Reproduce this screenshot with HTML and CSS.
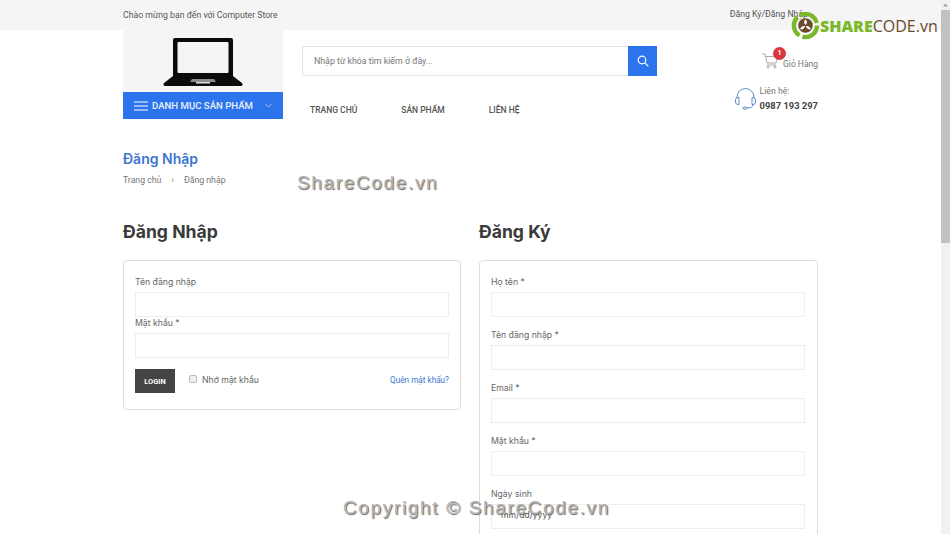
FILE: index.html
```html
<!DOCTYPE html>
<html lang="vi">
<head>
    <meta charset="UTF-8">
    <meta name="viewport" content="width=device-width, initial-scale=1.0">
    <title>Đăng Nhập</title>
    <link rel="stylesheet" href="styles.css">
</head>
<body>
    <div class="page">
        <div class="topbar">
            <div class="container topbar-inner">
                <span>Chào mừng bạn đến với Computer Store</span>
                <a class="topbar-link">Đăng Ký/Đăng Nhập</a>
            </div>
        </div>

        <header class="container header">
            <div class="brand">
                <div class="logo">
                    <svg width="80" height="50" viewBox="0 0 80 50">
                        <path d="M10 3a2 2 0 0 1 2-2h56a2 2 0 0 1 2 2v36l9 7a2 2 0 0 1-1 3H2a2 2 0 0 1-1-3l9-7z" fill="#0b0b0b"/>
                        <rect x="14.500" y="5" width="51" height="31" rx="1" fill="#f5f5f5"/>
                        <path d="M29 42h22l2 3H27z" fill="#8a8a8a"/>
                        <rect x="33" y="45" width="14" height="1.500" fill="#ddd"/>
                    </svg>
                </div>
                <div class="menu-btn">
                    <svg width="14" height="10" viewBox="0 0 14 10" stroke="#fff" stroke-width="1.200">
                        <path d="M0 1h14M0 5h14M0 9h14"/>
                    </svg>
                    <span>DANH MỤC SẢN PHẨM</span>
                    <svg class="menu-caret" width="7" height="5" viewBox="0 0 7 5" fill="none" stroke="#c6d9f9" stroke-width=".8">
                        <path d="M.5 1l3 3 3-3"/>
                    </svg>
                </div>
            </div>

            <div class="middle">
                <div class="search">
                    <input type="text" placeholder="Nhập từ khóa tìm kiếm ở đây...">
                    <button class="search-btn">
                        <svg width="12" height="12" viewBox="0 0 12 12" fill="none" stroke="#fff" stroke-width="1.200">
                            <circle cx="5" cy="5" r="3.800"/>
                            <path d="M7.800 7.800L11.300 11.300"/>
                        </svg>
                    </button>
                </div>
                <nav class="nav">
                    <a>TRANG CHỦ</a>
                    <a>SẢN PHẨM</a>
                    <a>LIÊN HỆ</a>
                </nav>
            </div>

            <div class="aside">
                <div class="cart">
                    <svg width="16" height="16" viewBox="0 0 16 16" fill="none" stroke="#888" stroke-width=".7">
                        <path d="M0 1h3l2 9h9l1.500-6.500H3.600"/>
                        <path d="M5 12h9"/>
                        <circle cx="6" cy="14" r="1"/>
                        <circle cx="13" cy="14" r="1"/>
                    </svg>
                    <span class="cart-badge">1</span>
                    <span class="cart-label">Giỏ Hàng</span>
                </div>
                <div class="contact">
                    <svg width="21" height="23" viewBox="0 0 21 23" fill="none" stroke="#4f7fc9" stroke-width=".9">
                        <path d="M2 11V10a8.500 8.500 0 0 1 17 0v1"/>
                        <path d="M4 10.500H3a2.500 2.500 0 0 0-2.500 2.500v2A2.500 2.500 0 0 0 3 17.500h1z"/>
                        <path d="M17 10.500h1a2.500 2.500 0 0 1 2.500 2.500v2a2.500 2.500 0 0 1-2.500 2.500h-1z"/>
                        <path d="M18 17.500c0 2.500-2 3.500-6 3.500"/>
                        <rect x="8" y="20" width="4" height="2" rx="1"/>
                    </svg>
                    <div>
                        <div class="contact-label">Liên hệ:</div>
                        <div class="contact-phone">0987 193 297</div>
                    </div>
                </div>
            </div>
        </header>

        <main class="container">
            <section class="crumbs">
                <h2>Đăng Nhập</h2>
                <div class="crumb-row">
                    <span>Trang chủ</span>
                    <span class="crumb-sep">›</span>
                    <span>Đăng nhập</span>
                </div>
            </section>

            <div class="columns">
                <section>
                    <h3>Đăng Nhập</h3>
                    <form class="card login-card">
                        <label class="field">Tên đăng nhập
                            <input type="text">
                        </label>
                        <label class="field">Mật khẩu *
                            <input type="password">
                        </label>
                        <div class="login-row">
                            <button type="button" class="login-btn">LOGIN</button>
                            <label class="remember"><input type="checkbox">Nhớ mật khẩu</label>
                            <a class="forgot">Quên mật khẩu?</a>
                        </div>
                    </form>
                </section>

                <section>
                    <h3>Đăng Ký</h3>
                    <form class="card register-card">
                        <label class="field">Họ tên *
                            <input type="text">
                        </label>
                        <label class="field">Tên đăng nhập *
                            <input type="text">
                        </label>
                        <label class="field">Email *
                            <input type="text">
                        </label>
                        <label class="field">Mật khẩu *
                            <input type="password">
                        </label>
                        <label class="field">Ngày sinh
                            <input class="date" type="text" placeholder="mm/dd/yyyy">
                        </label>
                    </form>
                </section>
            </div>
        </main>
    </div>

    <div class="scrollbar">
        <svg class="scroll-arrow" width="9" height="6" viewBox="0 0 9 6"><path d="M4.500 1.500L7 4.500H2z" fill="#a0a0a0"/></svg>
        <div class="scroll-thumb"></div>
    </div>

    <div class="mark mark-top">ShareCode.vn</div>
    <div class="mark mark-bottom">Copyright © ShareCode.vn</div>
    <div class="sc-logo">
        <svg width="29" height="29" viewBox="0 0 30 30">
            <circle cx="15" cy="15" r="12" fill="none" stroke="#7ab829" stroke-width="4.500" stroke-dasharray="22 3.100"/>
            <circle cx="15" cy="15" r="7.500" fill="#6b4a2c"/>
            <path d="M15 8.500c2 2 2 4 0 6c-2-2-2-4 0-6zM9.500 19c.5-2.500 2.500-4 5-3.500c-.5 2.500-2.500 4-5 3.500zM20.500 19c-2.500.5-4.500-1-5-3.500c2.500-.5 4.500 1 5 3.500z" fill="#fff"/>
        </svg>
        <span class="sc-name"><b>SHARE</b>CODE.vn</span>
    </div>
</body>
</html>
```

FILE: styles.css
```css
* {
    box-sizing: border-box;
}

body {
    margin: 0;
    font-family: Inter, Roboto, sans-serif;
    font-size: 8.700px;
    color: #666;
    background-color: #fff;
    overflow: hidden;
}

.page {
    height: 100vh;
    overflow: hidden;
}

.scrollbar {
    position: absolute;
    top: 0;
    right: 0;
    width: 9px;
    height: 100%;
    background-color: #f1f1f1;
}

.scroll-arrow {
    display: block;
    margin-top: 2px;
}

.scroll-thumb {
    height: 233px;
    margin-top: 2px;
    background-color: #c1c1c1;
}

.container {
    width: 695px;
    margin-left: 123px;
}

.topbar {
    height: 30px;
    background-color: #f5f5f5;
}

.topbar-inner {
    display: flex;
    justify-content: space-between;
    align-items: center;
    height: 29px;
    color: #555;
    font-family: Roboto, sans-serif;
    font-size: 8.700px;
}

.topbar-link {
    margin: -2px 10px 0 0;
}

.header {
    display: flex;
    height: 89px;
}

.brand {
    width: 160px;
}

.logo {
    display: flex;
    justify-content: center;
    align-items: flex-start;
    height: 62px;
    padding-top: 7px;
    background-color: #f5f5f5;
}

.menu-btn {
    display: flex;
    align-items: center;
    height: 27px;
    padding: 0 11px;
    background-color: #2c74ec;
    color: #e9f0fd;
    font-family: Roboto, sans-serif;
    font-size: 9.600px;
    font-weight: 500;
}

.menu-btn span {
    margin-left: 4px;
}

.menu-caret {
    margin-left: auto;
}

.middle {
    width: 355px;
    margin-left: 19px;
    padding-top: 16px;
}

.search {
    display: flex;
    height: 30px;
}

.search input {
    flex: 1;
    min-width: 0;
    padding: 0 11px;
    border: 1px solid #e4e4e4;
    border-right: 0;
    font-family: Roboto, sans-serif;
    font-size: 8.800px;
}

.search input::placeholder {
    color: #777;
}

.search-btn {
    display: flex;
    justify-content: center;
    align-items: center;
    width: 29px;
    padding: 0;
    border: 0;
    background-color: #2c74ec;
}

.nav {
    display: flex;
    gap: 44px;
    margin-top: 29px;
    padding-left: 8px;
    color: #555;
    font-family: Roboto, sans-serif;
    font-size: 8.500px;
    font-weight: 500;
}

.aside {
    flex: 1;
    display: flex;
    flex-direction: column;
    align-items: flex-end;
}

.cart {
    position: relative;
    display: flex;
    align-items: flex-end;
    gap: 5px;
    margin-top: 23px;
    color: #777;
    font-family: Roboto, sans-serif;
    font-size: 8.500px;
}

.cart-badge {
    position: absolute;
    top: -6px;
    left: 11px;
    width: 13px;
    height: 13px;
    border-radius: 50%;
    background-color: #d9363e;
    color: #fff;
    font-size: 7px;
    font-weight: 700;
    line-height: 13px;
    text-align: center;
}

.contact {
    display: flex;
    align-items: center;
    gap: 4px;
    margin-top: 17px;
    font-family: Roboto, sans-serif;
}

.contact-label {
    color: #777;
}

.contact-phone {
    margin-top: 4px;
    color: #444;
    font-size: 9.400px;
    font-weight: 700;
}

.crumbs {
    padding-top: 31px;
}

h2 {
    margin: 0;
    color: #3d76cf;
    font-size: 14px;
    font-weight: 600;
}

.crumb-row {
    display: flex;
    gap: 10px;
    margin-top: 8px;
    color: #777;
    font-family: Roboto, sans-serif;
}

.columns {
    display: grid;
    grid-template-columns: 338px 339px;
    gap: 18px;
    align-items: start;
    margin-top: 35px;
}

h3 {
    margin: 0 0 16px;
    color: #3a3a3a;
    font-size: 17.600px;
    font-weight: 700;
    line-height: 24px;
}

.card {
    padding: 15px 11px 0;
    border: 1px solid #ddd;
    border-radius: 4px;
}

.login-card {
    height: 150px;
}

.register-card {
    height: 300px;
    padding-right: 12px;
}

.field {
    display: block;
    color: #666;
    line-height: 12px;
}

.field input {
    display: block;
    width: 100%;
    height: 25px;
    margin-top: 4px;
    border: 1px solid #eee;
    font-family: inherit;
    font-size: 9px;
}

.register-card .field {
    margin-bottom: 12px;
}

.field .date {
    padding: 0 0 3px 9px;
    font-size: 8.600px;
}

.date::placeholder {
    color: #555;
}

.login-row {
    display: flex;
    align-items: center;
    margin-top: 11px;
}

.login-btn {
    width: 40px;
    height: 24px;
    padding: 0;
    border: 0;
    background-color: #444;
    color: #fff;
    font-family: Roboto, sans-serif;
    font-size: 7.500px;
    font-weight: 700;
}

.remember {
    display: flex;
    align-items: center;
    gap: 5px;
    margin-left: 14px;
    margin-top: -2px;
}

.remember input {
    appearance: none;
    width: 8px;
    height: 8px;
    margin: -2px 0 0;
    border: 1px solid #bbb;
    border-radius: 2px;
    background-color: #eee;
}

.forgot {
    margin: -2px 0 0 auto;
    color: #3d76cf;
    font-family: Roboto, sans-serif;
    font-size: 8.200px;
}

.mark {
    position: absolute;
    color: #b5b5b5;
    font-family: "Liberation Sans", sans-serif;
    font-size: 19px;
    letter-spacing: 1.650px;
    text-shadow: 1px 1px 1px #666;
    white-space: nowrap;
}

.mark-top {
    top: 172px;
    left: 297px;
}

.mark-bottom {
    top: 497px;
    left: 343px;
}

.sc-logo {
    position: absolute;
    top: 11px;
    left: 791px;
    display: flex;
    align-items: center;
}

.sc-name {
    color: #6b4a2c;
    font-family: "Open Sans", sans-serif;
    font-size: 16px;
}

.sc-name b {
    color: #7ab829;
    font-weight: 800;
}
```
